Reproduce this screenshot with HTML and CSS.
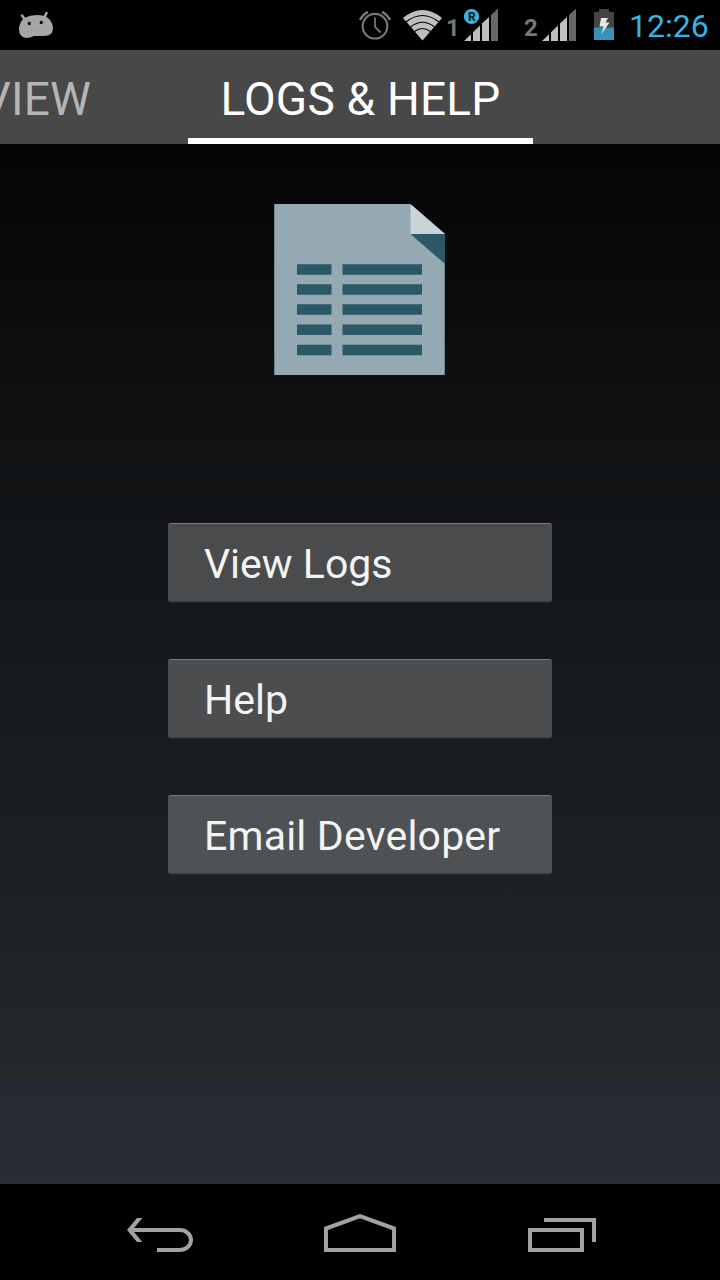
FILE: index.html
```html
<!DOCTYPE html>
<html lang="en">
<head>
<meta charset="utf-8">
<title>Logs &amp; Help</title>
<link rel="stylesheet" href="styles.css">
</head>
<body>
<div class="screen">
  <header class="status">
    <svg class="robot" width="36" height="28" viewBox="18 11 36 28">
      <path d="M22 15.500l3.500 5M46.500 13l-2.500 5" stroke="#a6a6a6" stroke-width="2.6" stroke-linecap="round"/>
      <path d="M24 18Q30 15 37 15Q46 15 50 20Q53 24 53 28Q53 36 44 36H34Q30 38 26 38Q19 37 19 29Q19 23 24 18Z" fill="#a6a6a6"/>
      <circle cx="29.3" cy="23.4" r="1.7"/><circle cx="41.3" cy="22.5" r="1.7"/>
      <path d="M33 28.5h6M33 31.5h6" stroke="#929292" stroke-dasharray="1 2"/>
    </svg>
    <svg class="alarm" width="34" height="32" viewBox="358 9 34 32">
      <g fill="none" stroke="#777"><circle cx="375" cy="26.2" r="12.3" stroke-width="2.1"/>
      <path d="M375 17.5V27L380.5 32.5" stroke-width="1.8"/>
      <path d="M360 20Q362.5 14.5 368 11.8M382 11.8Q387.5 14.5 390 20" stroke-width="2.5"/></g>
    </svg>
    <svg class="wifi" width="40" height="32" viewBox="402 9 40 32">
      <path d="M403 18Q422.5 2 442 18L422.5 40.5Z" fill="#bdbfc1"/>
      <path d="M406 22Q422.500 9 439 22M410.500 27Q422.500 17.500 434.500 27M414.500 31.500Q422.500 25.500 430.500 31.500" fill="none" stroke="#000" stroke-width="1.2"/>
    </svg>
    <span class="sim sim-one">1</span>
    <svg class="signal-one" width="35" height="33" viewBox="464 9 35 33">
      <path d="M464 41L471 34.300V41ZM473 32.300L480 25.500V41H473ZM482 23.600L489 17V41H482Z" fill="#bdbfc1"/>
      <path d="M491 15L498 8.500V41H491Z" fill="#686868"/>
      <circle cx="471.500" cy="16.500" r="7.600" fill="#33b5e5"/>
      <text class="roaming" x="468" y="21">R</text>
    </svg>
    <span class="sim sim-two">2</span>
    <svg class="signal-two" width="35" height="33" viewBox="542 9 35 33">
      <path d="M542 41L549 34.300V41ZM551 32.300L558 25.500V41H551ZM560 23.600L567 17V41H560Z" fill="#bdbfc1"/>
      <path d="M569 15L576 8.500V41H569Z" fill="#686868"/>
    </svg>
    <svg class="battery" width="20" height="31" viewBox="594 9 20 31">
      <path d="M599 9H609V12H614V40H594V12H599Z" fill="#444"/>
      <path d="M594 27.500H614V40H594Z" fill="#3792b7"/>
      <path d="M601 18H608L605.500 22.500H609.500L601.500 34L603.500 26.500H599.500Z" fill="#e5e8e9"/>
    </svg>
    <span class="clock">12:26</span>
  </header>

  <nav class="tabs">
    <span class="tab previous">VIEW</span>
    <span class="tab active"><span class="active-label">LOGS &amp; HELP</span></span>
  </nav>

  <main class="content">
    <svg class="document" width="171" height="171" viewBox="0 0 171 171">
      <path d="M0 0H136L171 30V171H0Z" fill="#94a9b1"/>
      <path d="M136.500 0L171 30H136.500Z" fill="#c9d4d8"/>
      <path d="M136.500 30H171V60Z" fill="#2a5866"/>
      <path d="M.5 0V171M170.500 60V171" stroke="#71858c"/>
      <path d="M23 65.500H57.500M68.500 65.500H148M23 85.500H57.500M68.500 85.500H148M23 105.500H57.500M68.500 105.500H148M23 125.800H57.500M68.500 125.800H148M23 146H57.500M68.500 146H148" stroke="#2a5866" stroke-width="10.500"/>
    </svg>
    <div class="actions">
      <button class="action logs"><span>View Logs</span></button>
      <button class="action help"><span>Help</span></button>
      <button class="action email"><span>Email Developer</span></button>
    </div>
  </main>

  <footer class="navigation">
    <svg class="back" width="67" height="36" viewBox="0 0 67 36">
      <path d="M0 13L10 1H15.300L5.500 13L15.300 25H10Z" fill="#a2a2a2"/>
      <path d="M4 13H53A11 10 0 0 1 53 33H30" fill="none" stroke="#a2a2a2" stroke-width="4"/>
    </svg>
    <svg class="home" width="72" height="38" viewBox="0 0 72 38">
      <path d="M2 36V14.500L36 2.100L70 14.500V36Z" fill="none" stroke="#a2a2a2" stroke-width="4"/>
    </svg>
    <svg class="recent" width="68" height="34" viewBox="0 0 68 34">
      <path d="M2 12H54V32H2ZM16 2H66V24" fill="none" stroke="#a2a2a2" stroke-width="4"/>
    </svg>
  </footer>
</div>
</body>
</html>
```

FILE: styles.css
```css
* { box-sizing: border-box; }
body { margin: 0; background: #000; font-family: Roboto, "Liberation Sans", sans-serif; }
.screen { width: 720px; height: 1280px; display: flex; flex-direction: column; overflow: hidden; }
svg { display: block; flex: none; }

.status { height: 50px; padding: 9px 0 0 18px; display: flex; align-items: flex-start; background: #000; }
.robot { margin-top: 2px; }
.alarm { margin-left: 304px; }
.wifi { margin-left: 10px; }
.sim { font-size: 24px; line-height: 30px; font-weight: 700; color: #777; margin-top: 4px; width: 15px; white-space: nowrap; }
.sim-one { margin-left: 4px; }
.signal-one { margin-left: 3px; }
.sim-two { margin-left: 25px; }
.signal-two { margin-left: 3px; }
.battery { margin-left: 17px; }
.roaming { font-size: 12px; font-weight: 900; fill: #17252b; }
.clock { margin-left: 15px; font-size: 32px; line-height: 34px; color: #33b5e5; white-space: nowrap; }

.tabs { height: 94px; display: flex; background: #484848; overflow: hidden; font-size: 46px; line-height: 98px; letter-spacing: .2px; white-space: nowrap; }
.previous { width: 91px; display: flex; justify-content: flex-end; color: #b5b5b5; }
.active { margin-left: 97px; width: 345px; text-align: center; color: #fff; border-bottom: 6px solid #fff; }
.active-label { display: block; }

.content { height: 1040px; padding-top: 60px; display: flex; flex-direction: column; align-items: center; background: linear-gradient(#040505 0%, #101214 29%, #171b1e 53%, #1e2225 75%, #24292b 90%, #252932 90%, #292c34 100%); }
.document { margin-right: 1px; }
.actions { width: 384px; margin-top: 148px; display: flex; flex-direction: column; gap: 57px; }
.action { height: 79px; padding: 3px 0 0 36px; border: 0; border-top: 1px solid #77797a; border-bottom: 1px solid #393c3e; border-radius: 3px; background: #4a4b4c; box-shadow: 0 1px 0 rgba(57, 60, 62, .5); color: #f3f3f3; font: 41px/74px Roboto, "Liberation Sans", sans-serif; text-align: left; white-space: nowrap; }
.action span { display: block; }
.help { background: #4c4d4f; }
.email { background: #4f5254; letter-spacing: .2px; }

.navigation { height: 96px; padding: 30px 124px 0 127px; display: flex; background: #000; }
.back { margin-top: 3px; }
.home { margin-left: 130px; }
.recent { margin: 4px 0 0 132px; }
```
